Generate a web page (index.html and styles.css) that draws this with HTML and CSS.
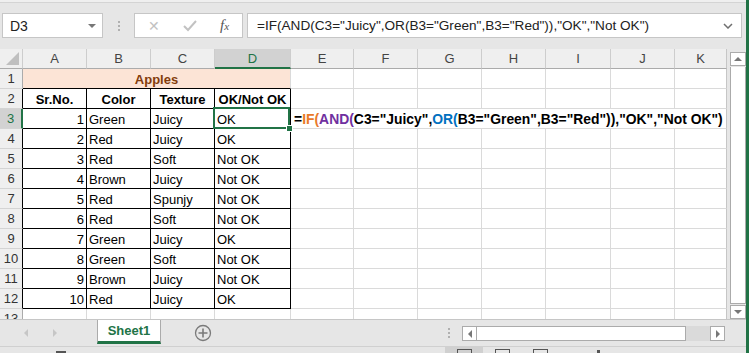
FILE: index.html
```html
<!DOCTYPE html>
<html>
  <head>
    <meta name="viewport" content="width=device-width, initial-scale=1">
    <link rel="stylesheet" href="styles.css">
  </head>
  <body>
    <div class="window">
      <div class="top-edge"></div>

      <!-- name box + formula bar -->
      <div class="formula-row">
        <div class="namebox"><span>D3</span><span class="caret"></span></div>
        <div class="grip"><i></i><i></i><i></i></div>
        <div class="fxbox">
          <span class="cancel">&#10005;</span>
          <svg class="enter" width="14" height="12" viewBox="0 0 14 12"><polyline points="1,6 5,10 13,1" fill="none" stroke="#c2c2c2" stroke-width="2"/></svg>
          <span class="fx">f<small>x</small></span>
        </div>
        <div class="finput">
          <span>=IF(AND(C3="Juicy",OR(B3="Green",B3="Red")),"OK","Not OK")</span>
          <svg width="10" height="6" viewBox="0 0 10 6"><polyline points="1,1 5,5 9,1" fill="none" stroke="#6f6f6f" stroke-width="1.5"/></svg>
        </div>
      </div>

      <!-- sheet -->
      <div class="sheet-area">
        <div class="grid">
          <div class="row head">
            <div class="corner"><span></span></div>
            <div class="ch">A</div><div class="ch">B</div><div class="ch">C</div><div class="ch sel">D</div>
            <div class="ch">E</div><div class="ch">F</div><div class="ch">G</div><div class="ch">H</div>
            <div class="ch">I</div><div class="ch">J</div><div class="ch">K</div>
          </div>
          <div class="row">
            <div class="rh">1</div><div class="c title">Apples</div>
            <div class="c"></div><div class="c"></div><div class="c"></div><div class="c"></div><div class="c"></div><div class="c"></div><div class="c"></div>
          </div>
          <div class="row">
            <div class="rh dk">2</div><div class="c b hd">Sr.No.</div><div class="c b hd">Color</div><div class="c b hd">Texture</div><div class="c b hd">OK/Not OK</div>
            <div class="c"></div><div class="c"></div><div class="c"></div><div class="c"></div><div class="c"></div><div class="c"></div><div class="c"></div>
          </div>
          <div class="row">
            <div class="rh sel">3</div><div class="c b num">1</div><div class="c b">Green</div><div class="c b">Juicy</div><div class="c b">OK</div>
            <div class="c formula">=<span class="f-if">IF(</span><span class="f-and">AND(</span>C3="Juicy",<span class="f-or">OR(</span>B3="Green",B3="Red")),"OK","Not OK")</div>
          </div>
          <div class="row">
            <div class="rh dk">4</div><div class="c b num">2</div><div class="c b">Red</div><div class="c b">Juicy</div><div class="c b">OK</div>
            <div class="c"></div><div class="c"></div><div class="c"></div><div class="c"></div><div class="c"></div><div class="c"></div><div class="c"></div>
          </div>
          <div class="row">
            <div class="rh dk">5</div><div class="c b num">3</div><div class="c b">Red</div><div class="c b">Soft</div><div class="c b">Not OK</div>
            <div class="c"></div><div class="c"></div><div class="c"></div><div class="c"></div><div class="c"></div><div class="c"></div><div class="c"></div>
          </div>
          <div class="row">
            <div class="rh dk">6</div><div class="c b num">4</div><div class="c b">Brown</div><div class="c b">Juicy</div><div class="c b">Not OK</div>
            <div class="c"></div><div class="c"></div><div class="c"></div><div class="c"></div><div class="c"></div><div class="c"></div><div class="c"></div>
          </div>
          <div class="row">
            <div class="rh dk">7</div><div class="c b num">5</div><div class="c b">Red</div><div class="c b">Spunjy</div><div class="c b">Not OK</div>
            <div class="c"></div><div class="c"></div><div class="c"></div><div class="c"></div><div class="c"></div><div class="c"></div><div class="c"></div>
          </div>
          <div class="row">
            <div class="rh dk">8</div><div class="c b num">6</div><div class="c b">Red</div><div class="c b">Soft</div><div class="c b">Not OK</div>
            <div class="c"></div><div class="c"></div><div class="c"></div><div class="c"></div><div class="c"></div><div class="c"></div><div class="c"></div>
          </div>
          <div class="row">
            <div class="rh dk">9</div><div class="c b num">7</div><div class="c b">Green</div><div class="c b">Juicy</div><div class="c b">OK</div>
            <div class="c"></div><div class="c"></div><div class="c"></div><div class="c"></div><div class="c"></div><div class="c"></div><div class="c"></div>
          </div>
          <div class="row">
            <div class="rh dk">10</div><div class="c b num">8</div><div class="c b">Green</div><div class="c b">Soft</div><div class="c b">Not OK</div>
            <div class="c"></div><div class="c"></div><div class="c"></div><div class="c"></div><div class="c"></div><div class="c"></div><div class="c"></div>
          </div>
          <div class="row">
            <div class="rh dk">11</div><div class="c b num">9</div><div class="c b">Brown</div><div class="c b">Juicy</div><div class="c b">Not OK</div>
            <div class="c"></div><div class="c"></div><div class="c"></div><div class="c"></div><div class="c"></div><div class="c"></div><div class="c"></div>
          </div>
          <div class="row">
            <div class="rh dk">12</div><div class="c b num">10</div><div class="c b">Red</div><div class="c b">Juicy</div><div class="c b">OK</div>
            <div class="c"></div><div class="c"></div><div class="c"></div><div class="c"></div><div class="c"></div><div class="c"></div><div class="c"></div>
          </div>
          <div class="row">
            <div class="rh">13</div>
            <div class="c"></div><div class="c"></div><div class="c"></div><div class="c"></div><div class="c"></div><div class="c"></div>
            <div class="c"></div><div class="c"></div><div class="c"></div><div class="c"></div><div class="c"></div>
          </div>

          <!-- active cell frame over D3 -->
          <div class="active"><span class="handle"></span></div>
        </div>

        <div class="vscroll">
          <div class="sbtn"><span class="arr up"></span></div>
          <div class="vthumb"></div>
          <div class="sbtn"><span class="arr down"></span></div>
        </div>
      </div>

      <!-- sheet tabs -->
      <div class="tabs-row">
        <span class="nav left"></span>
        <span class="nav right"></span>
        <div class="tab">Sheet1</div>
        <svg class="add" width="18" height="18" viewBox="0 0 18 18">
          <circle cx="9" cy="9" r="7.5" fill="none" stroke="#7a7a7a" stroke-width="1.3"/>
          <path d="M9 4.5v9M4.5 9h9" stroke="#7a7a7a" stroke-width="1.6"/>
        </svg>
        <div class="grip h"><i></i><i></i><i></i></div>
        <div class="hscroll">
          <div class="sbtn"><span class="arr left"></span></div>
          <div class="hthumb"></div>
          <div class="htrack"></div>
          <div class="sbtn"><span class="arr right"></span></div>
        </div>
      </div>

      <!-- status bar, mostly cut off -->
      <div class="status-row">
        <span class="st-macro"></span>
        <span class="view on"><i></i></span>
        <span class="view"><i></i></span>
        <span class="view"><i></i></span>
        <span class="st-knob"></span>
      </div>
    </div>
  </body>
</html>
```

FILE: styles.css
```css
/* page */
body {
  margin: 0;
  width: 749px;
  height: 353px;
  overflow: hidden;
  font-family: "Liberation Sans", Arial, sans-serif;
  font-size: 13px;
  color: #000;
  background: #e6e6e6;
}

.window {
  width: 746px;
  height: 353px;
  border-right: 3px solid #217346;
  background: #e6e6e6;
  display: flex;
  flex-direction: column;
}

.top-edge {
  height: 2px;
  background: #efefef;
  border-bottom: 1px solid #d4d4d4;
}

/* formula bar */
.formula-row {
  display: flex;
  height: 25px;
  margin-top: 10px;
}

.namebox {
  margin-left: 2px;
  width: 101px;
  box-sizing: border-box;
  border: 1px solid #c6c6c6;
  background: #fff;
  display: flex;
  align-items: center;
  justify-content: space-between;
  padding: 0 6px 0 7px;
  font-size: 14px;
  color: #222;
}

.caret {
  width: 0;
  height: 0;
  border-left: 4px solid transparent;
  border-right: 4px solid transparent;
  border-top: 4px solid #777;
}

.grip {
  width: 31px;
  display: flex;
  flex-direction: column;
  align-items: center;
  justify-content: center;
  gap: 2px;
}

.grip i {
  width: 2px;
  height: 2px;
  background: #b0b0b0;
}

.fxbox {
  width: 109px;
  box-sizing: border-box;
  border: 1px solid #c6c6c6;
  background: #fff;
  display: flex;
  align-items: center;
  padding-left: 13px;
}

.cancel {
  color: #c2c2c2;
  font-size: 14px;
  width: 13px;
}

.enter {
  margin-left: 22px;
}

.fx {
  margin-left: 23px;
  font-family: "Liberation Serif", serif;
  font-style: italic;
  font-size: 15px;
  color: #555;
}

.fx small {
  font-size: 11px;
}

.finput {
  margin-left: 4px;
  width: 495px;
  box-sizing: border-box;
  border: 1px solid #c6c6c6;
  background: #fff;
  display: flex;
  align-items: center;
  justify-content: space-between;
  padding: 0 8px 0 9px;
  font-size: 13.6px;
  color: #222;
}

/* sheet */
.sheet-area {
  display: flex;
  margin-top: 11px;
  height: 270px;
}

.grid {
  position: relative;
  width: 727px;
  height: 270px;
  overflow: hidden;
  background: #fff;
}

.row {
  display: grid;
  grid-template-columns: 23px 64px 64px 64px 76px 63px 64px 64px 64px 65px 64px 52px;
  height: 20px;
}

.row > div {
  box-sizing: border-box;
  height: 20px;
  white-space: nowrap;
}

.head > div {
  background: #efefef;
  border-right: 1px solid #cdcdcd;
  border-bottom: 1px solid #ababab;
  text-align: center;
  line-height: 19px;
  color: #444;
}

.head .ch.sel {
  background: #d2d2d2;
  border-bottom: 2px solid #217346;
  color: #217346;
}

.corner {
  display: flex;
  justify-content: flex-end;
  align-items: flex-end;
  padding: 0 3px 3px 0;
}

.corner span {
  width: 0;
  height: 0;
  border-left: 13px solid transparent;
  border-bottom: 13px solid #bfbfbf;
}

.rh {
  background: #efefef;
  border-right: 1px solid #ababab;
  border-bottom: 1px solid #d4d4d4;
  text-align: center;
  line-height: 19px;
  color: #333;
}

.rh.dk {
  border-right-color: #000;
}

.rh.sel {
  background: #d2d2d2;
  border-right: 2px solid #217346;
  color: #217346;
}

.c {
  border-right: 1px solid #dadada;
  border-bottom: 1px solid #dadada;
  line-height: 21px;
  padding: 0 2px;
}

.c.b {
  border-right-color: #000;
  border-bottom-color: #000;
}

.c.num {
  text-align: right;
}

.c.hd {
  font-weight: bold;
  text-align: center;
}

.c.title {
  grid-column: span 4;
  background: #fce4d6;
  border-bottom-color: #000;
  color: #833c0c;
  font-weight: bold;
  text-align: center;
}

.c.formula {
  grid-column: span 7;
  font-weight: bold;
  font-size: 13.9px;
  padding-left: 3px;
}

.f-if { color: #e97a2a; }
.f-and { color: #7030a0; }
.f-or { color: #0070c0; }

.grid .row > div:last-child {
  border-right-color: #c6c6c6;
}

.active {
  position: absolute;
  left: 213px;
  top: 58px;
  width: 77px;
  height: 22px;
  box-sizing: border-box;
  border: 2px solid #217346;
}

.handle {
  position: absolute;
  right: -5px;
  bottom: -5px;
  width: 5px;
  height: 5px;
  background: #217346;
  border: 1px solid #fff;
}

/* scroll bars */
.vscroll {
  margin-left: 3px;
  margin-top: 3px;
  width: 16px;
  display: flex;
  flex-direction: column;
}

.sbtn {
  box-sizing: border-box;
  width: 16px;
  height: 14px;
  border: 1px solid #ababab;
  background: #fff;
  display: flex;
  align-items: center;
  justify-content: center;
}

.vthumb {
  flex: 1;
  margin: 1px 0;
  border: 1px solid #ababab;
  border-top: none;
  background: #fff;
}

.arr {
  width: 0;
  height: 0;
}

.arr.up {
  border-left: 4px solid transparent;
  border-right: 4px solid transparent;
  border-bottom: 4px solid #777;
}

.arr.down {
  border-left: 4px solid transparent;
  border-right: 4px solid transparent;
  border-top: 4px solid #777;
}

.arr.left {
  border-top: 4px solid transparent;
  border-bottom: 4px solid transparent;
  border-right: 4px solid #777;
}

.arr.right {
  border-top: 4px solid transparent;
  border-bottom: 4px solid transparent;
  border-left: 4px solid #777;
}

/* tabs */
.tabs-row {
  height: 25px;
  border-top: 1px solid #c6c6c6;
  display: flex;
  align-items: flex-start;
  box-sizing: border-box;
}

.nav {
  margin-top: 9px;
  width: 0;
  height: 0;
  border-top: 4px solid transparent;
  border-bottom: 4px solid transparent;
}

.nav.left {
  margin-left: 24px;
  border-right: 4px solid #c6c6c6;
}

.nav.right {
  margin-left: 25px;
  border-left: 4px solid #c6c6c6;
}

.tab {
  margin-left: 40px;
  width: 64px;
  height: 24px;
  box-sizing: border-box;
  background: #fff;
  border-left: 1px solid #ababab;
  border-right: 1px solid #ababab;
  border-bottom: 3px solid #217346;
  color: #217346;
  font-weight: bold;
  text-align: center;
  line-height: 21px;
}

.add {
  margin-left: 33px;
  margin-top: 4px;
}

.grip.h {
  width: 6px;
  margin-left: 234px;
  margin-top: 8px;
}

.hscroll {
  margin-left: 10px;
  margin-top: 6px;
  width: 263px;
  height: 15px;
  display: flex;
}

.hscroll .sbtn {
  width: 15px;
  height: 15px;
}

.hthumb {
  width: 209px;
  box-sizing: border-box;
  border: 1px solid #ababab;
  border-left: none;
  background: #fff;
}

.htrack {
  flex: 1;
  background: #dadada;
}

/* status bar */
.status-row {
  flex: 1;
  border-top: 1px solid #d0d0d0;
  margin-top: 2px;
  display: flex;
  align-items: flex-end;
  position: relative;
}

.st-macro {
  margin-left: 56px;
  width: 10px;
  height: 2px;
  background: #555;
}

.view {
  height: 6px;
  width: 38px;
  display: flex;
  justify-content: center;
  align-items: flex-end;
}

.view.on {
  margin-left: 379px;
  background: #d0d0d0;
}

.view i {
  width: 13px;
  height: 3px;
  border: 1px solid #555;
  border-bottom: none;
}

.st-knob {
  margin-left: 38px;
  width: 3px;
  height: 3px;
  background: #555;
}
```
